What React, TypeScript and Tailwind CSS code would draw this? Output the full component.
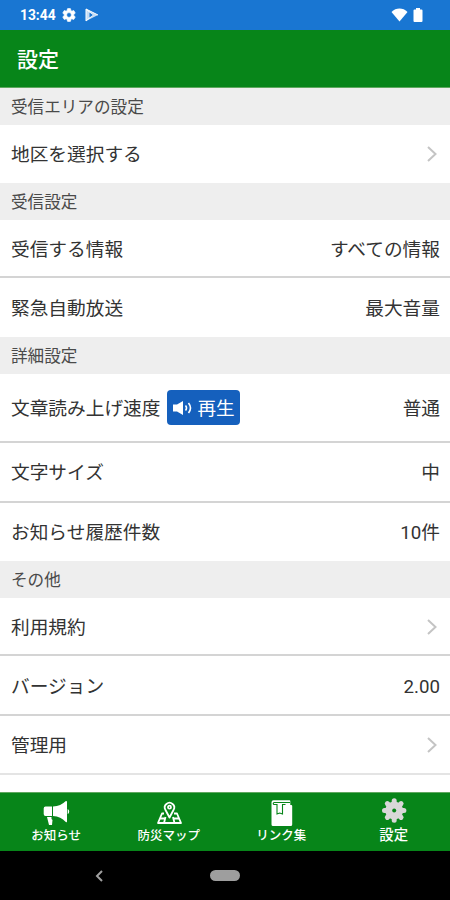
import type { ReactNode } from 'react';

interface RowProps {
  label: string;
  value?: string;
  className?: string;
  children?: ReactNode;
}

function SectionTitle({ children }: { children: ReactNode }) {
  return (
    <h2 className="flex h-[37px] shrink-0 items-center bg-[#eeeeee] pt-[4px] pl-[11px] text-[16.6px] leading-none text-[#4a4a4a]">
      {children}
    </h2>
  );
}

function Row({ label, value, className = 'h-[58px]', children }: RowProps) {
  return (
    <div className={`flex shrink-0 items-center pl-[11px] pr-2.5 text-[18.7px] leading-none text-[#333] ${className}`}>
      <span className="pt-[3px]">{label}</span>
      {children}
      {value ? (
        <span className="ml-auto pt-[3px]">{value}</span>
      ) : (
        <svg className="ml-auto mr-[3px] h-4 w-[10px]" viewBox="0 0 10 16" fill="none" stroke="#c4c4c4" strokeWidth="2">
          <path d="M1 1l7.5 7L1 15" />
        </svg>
      )}
    </div>
  );
}

function Tab({ label, large, children }: { label: string; large?: boolean; children: ReactNode }) {
  return (
    <button className="flex flex-1 flex-col items-center pt-[7px] text-white">
      <svg className="h-[26px] w-[26px] overflow-visible" viewBox="0 0 26 26">{children}</svg>
      <span className={large ? 'mt-[3px] text-[14.4px] leading-[14px] font-medium' : 'mt-[3px] text-[12.5px] leading-[14px] font-medium'}>
        {label}
      </span>
    </button>
  );
}

const GEAR =
  'M19.14 12.94c.04-.3.06-.61.06-.94s-.02-.64-.07-.94l2.03-1.58c.18-.14.23-.41.12-.61l-1.92-3.32c-.12-.22-.37-.29-.59-.22l-2.39.96c-.5-.38-1.03-.7-1.62-.94L14.4 2.81c-.04-.24-.24-.41-.48-.41h-3.84c-.24 0-.43.17-.47.41l-.36 2.54c-.59.24-1.13.57-1.62.94l-2.39-.96c-.22-.08-.47 0-.59.22L2.74 8.87c-.12.21-.08.47.12.61l2.03 1.58c-.05.3-.09.63-.09.94s.02.64.07.94l-2.03 1.58c-.18.14-.23.41-.12.61l1.92 3.32c.12.22.37.29.59.22l2.39-.96c.5.38 1.03.7 1.62.94l.36 2.54c.05.24.24.41.48.41h3.84c.24 0 .44-.17.47-.41l.36-2.54c.59-.24 1.13-.56 1.62-.94l2.39.96c.22.08.47 0 .59-.22l1.92-3.32c.12-.22.07-.47-.12-.61l-2.01-1.58zM12 15.6A3.6 3.6 0 1 1 12 8.4a3.6 3.6 0 0 1 0 7.2z';

export default function App() {
  return (
    <div className="flex h-[900px] w-[450px] flex-col overflow-hidden bg-white font-['Roboto','Noto_Sans_CJK_JP',sans-serif]">
      {/* status bar */}
      <div className="flex h-[30px] shrink-0 items-center bg-[#1976d2] pl-5 pr-[27px] text-white">
        <span className="w-[36px] pt-px text-[13.8px] leading-none font-bold">13:44</span>
        <svg className="ml-[5px] h-4 w-4" viewBox="0 0 24 24" fill="currentColor" stroke="currentColor">
          <path d={GEAR} />
        </svg>
        <svg className="ml-[8px] h-[14px] w-[14px]" viewBox="0 0 14 14">
          <path d="M1 1v12l12-6z" fill="#fff" fillOpacity="0.75" />
          <path d="M1 1v12l7-6zM1 1l12 6" fill="none" stroke="#fff" />
          <path d="M4.5 4.5v5L8 7z" fill="#1976d2" />
        </svg>
        <svg className="ml-auto h-[14px] w-[17px]" viewBox="0 0 17 14" fill="currentColor">
          <path d="M.5 4C5-.6 12-.6 16.5 4L8.5 13.5z" />
        </svg>
        <svg className="ml-[5px] h-[14px] w-[10px]" viewBox="0 0 10 14" fill="currentColor">
          <path d="M3 0h4v1.5h1.5q1 0 1 1V13q0 1-1 1h-7q-1 0-1-1V2.500q0-1 1-1H3z" />
        </svg>
      </div>

      <header className="flex h-[58px] shrink-0 items-center border-b border-[#5fa85f] bg-[#078519] pt-[3px] pl-[17px] text-[21px] leading-none font-medium text-white">
        設定
      </header>

      <main className="flex flex-1 flex-col">
        <SectionTitle>受信エリアの設定</SectionTitle>
        <Row label="地区を選択する" />
        <SectionTitle>受信設定</SectionTitle>
        <Row label="受信する情報" value="すべての情報" className="h-[58px] border-b-2 border-[#d4d4d4] pt-[2px]" />
        <Row label="緊急自動放送" value="最大音量" className="h-[59px] pt-px" />
        <SectionTitle>詳細設定</SectionTitle>
        <Row label="文章読み上げ速度" value="普通" className="h-[69px] border-b-2 border-[#d4d4d4]">
          <button className="ml-[6px] flex h-[35px] w-[73px] items-center rounded-[4px] bg-[#1560bd] pl-[6px] text-[18.6px] leading-none text-white">
            <svg className="mr-[5px] h-[14px] w-[20px]" viewBox="0 0 20 14" fill="currentColor">
              <path d="M0 3.5h4L10 0v14l-6-3.5H0z" />
              <path d="M12.5 4.5q2 2.500 0 5M15.500 2q4 5 0 10" fill="none" stroke="currentColor" strokeWidth="1.6" />
            </svg>
            <span className="pt-[3px]">再生</span>
          </button>
        </Row>
        <Row label="文字サイズ" value="中" className="h-[60px] border-b-2 border-[#d4d4d4]" />
        <Row label="お知らせ履歴件数" value="10件" />
        <SectionTitle>その他</SectionTitle>
        <Row label="利用規約" className="h-[58px] border-b-2 border-[#d4d4d4] pt-px" />
        <Row label="バージョン" value="2.00" className="h-[60px] border-b-2 border-[#d4d4d4] pt-px" />
        <Row label="管理用" className="h-[59px] border-b-2 border-[#e4e4e4]" />
      </main>

      <nav className="flex h-[59px] shrink-0 border-t border-[#5fa85f] bg-[#078519]">
        <Tab label="お知らせ">
          <path d="M9 6.5H2.500q-1.800 0-1.800 2v5.500q0 2 1.800 2H9zM10 6.500Q18 6 22.500 1.300 24 .5 24 2v19.500q0 1.500-1.500.3Q18 16.500 10 16zM24.700 9q1.500.5 1.500 2.500t-1.500 2.500zM4 17h4.500q-.5 2.500 1 3l-.5 5H6z" fill="#fff" />
        </Tab>
        <Tab label="防災マップ">
          <g fill="none" stroke="#fff" strokeWidth="1.8" strokeLinejoin="round">
            <path d="M8 13.500H6L2 23h23l-4-9.500h-3M4 18.500h5M17.500 18.500h5M9.500 17L8 23M17 17l1.500 6" />
            <path d="M13.500 17.500l-4-7.500a4.700 4.700 0 1 1 8 0z" />
            <circle cx="13.5" cy="7.2" r="1.5" />
          </g>
        </Tab>
        <Tab label="リンク集">
          <path d="M5.500.3h16q.8 0 .8.800v4h1q.9 0 .9.900v18.500q0 1.500-1.500 1.500H5q-1.500 0-1.500-1.500V2.300q0-2 2-2z" fill="#fff" />
          <path d="M22 2.500H6.200q-1 0-1 1t1 1H9V14l2.700-1 2.800 1V4.500h3" fill="none" stroke="#078519" strokeWidth="1.1" />
        </Tab>
        <Tab label="設定" large>
          <g stroke="#d8d8d8" strokeWidth="5" strokeLinecap="round">
            <path d="M13.200.8v19.400M3.500 10.500h19.400M6.340 3.640l13.720 13.720M20.060 3.640L6.340 17.360" />
          </g>
          <circle cx="13.2" cy="10.5" r="9" fill="#d8d8d8" />
          <circle cx="13.2" cy="10.5" r="2" fill="#078519" />
        </Tab>
      </nav>

      {/* system navigation */}
      <div className="grid h-[49px] shrink-0 grid-cols-[200px_50px_200px] items-center bg-black">
        <svg className="ml-[95px] h-3 w-2" viewBox="0 0 8 12" fill="none" stroke="#a0a0a0" strokeWidth="2">
          <path d="M7 1L2 6l5 5" />
        </svg>
        <div className="mx-auto h-[11px] w-[30px] rounded-full bg-[#9e9e9e]" />
      </div>
    </div>
  );
}
